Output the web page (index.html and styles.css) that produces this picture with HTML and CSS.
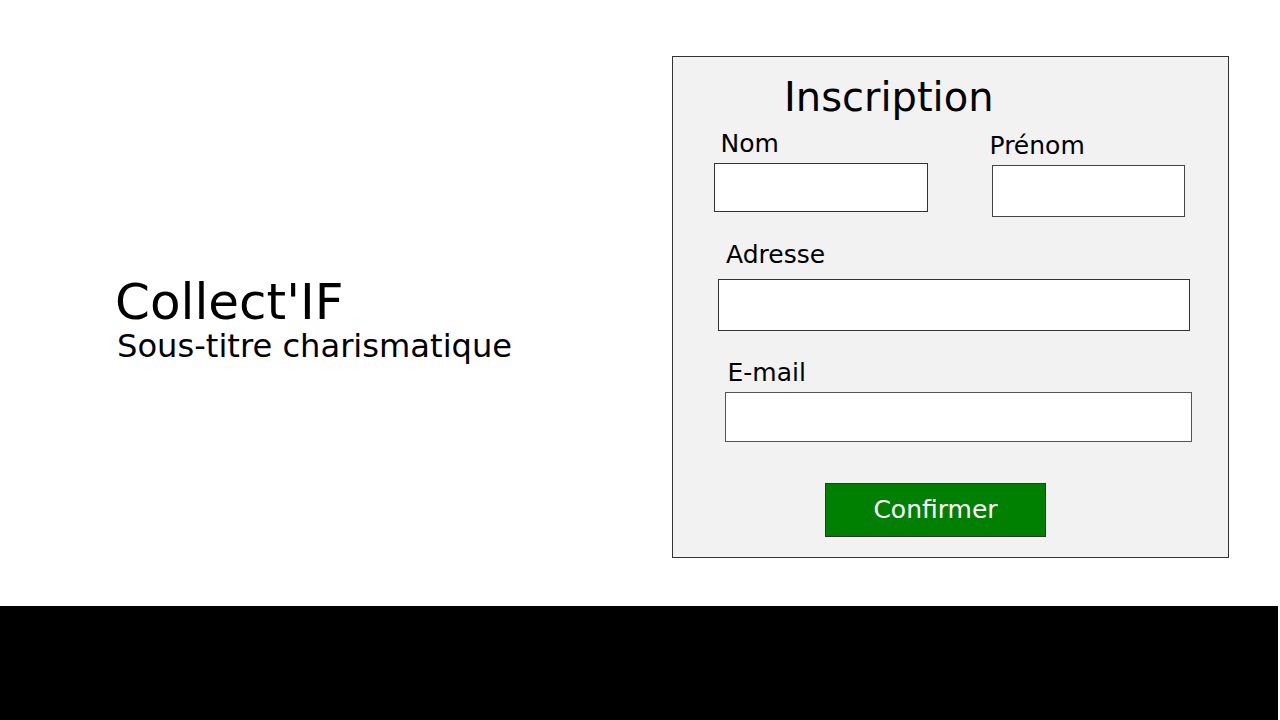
FILE: index.html
```html
<!DOCTYPE html>
<html lang="fr">
<head>
<meta charset="utf-8">
<title>Collect'IF - Inscription</title>
<link rel="stylesheet" href="styles.css">
</head>
<body>
<main class="page">
  <section class="brand">
    <h1 class="brand-title">Collect'IF</h1>
    <p class="brand-subtitle">Sous-titre charismatique</p>
  </section>
  <form class="card">
    <h2 class="card-title">Inscription</h2>
    <div class="names-row">
      <div class="field field-nom">
        <label class="field-label" for="nom">Nom</label>
        <input class="field-input" id="nom" type="text">
      </div>
      <div class="field field-prenom">
        <label class="field-label" for="prenom">Prénom</label>
        <input class="field-input" id="prenom" type="text">
      </div>
    </div>
    <div class="field field-adresse">
      <label class="field-label" for="adresse">Adresse</label>
      <input class="field-input" id="adresse" type="text">
    </div>
    <div class="field field-email">
      <label class="field-label" for="email">E-mail</label>
      <input class="field-input" id="email" type="email">
    </div>
    <button class="confirm" type="button">Confirmer</button>
  </form>
</main>
<footer class="footer"></footer>
</body>
</html>
```
FILE: styles.css
```css
* {
  box-sizing: border-box;
}

html, body {
  margin: 0;
  padding: 0;
  background: #ffffff;
}

body {
  font-family: "DejaVu Sans", "Liberation Sans", sans-serif;
  color: #000000;
  width: 1280px;
  height: 720px;
  overflow: hidden;
}

.page {
  display: flex;
  align-items: flex-start;
  height: 606px;
}

.brand {
  flex: 0 0 672px;
  padding-top: 277px;
  padding-left: 115px;
}

.brand-title {
  margin: 0;
  font-size: 50px;
  line-height: 50px;
  font-weight: normal;
}

.brand-subtitle {
  margin: 3px 0 0 2px;
  font-size: 32.15px;
  line-height: 32px;
}

.card {
  margin-top: 56px;
  width: 557px;
  height: 502px;
  background: #f2f2f2;
  border: 1px solid #333333;
  display: flex;
  flex-direction: column;
  align-items: flex-start;
}

.card-title {
  margin: 19.7px 0 0 111px;
  font-size: 40px;
  line-height: 40px;
  font-weight: normal;
}

.names-row {
  display: flex;
  align-items: flex-start;
  margin-top: 14.8px;
}

.field {
  display: flex;
  flex-direction: column;
  align-items: flex-start;
}

.field-label {
  font-size: 25px;
  line-height: 26px;
}

.field-input {
  display: block;
  margin: 5.5px 0 0 0;
  padding: 0;
  background: #ffffff;
  border: 1px solid #333333;
  border-radius: 0;
  font: inherit;
}

.field-nom {
  margin-left: 41px;
}
.field-nom .field-label {
  padding-left: 6.5px;
}
.field-nom .field-input {
  width: 214px;
  height: 49px;
}

.field-prenom {
  margin-left: 64px;
  margin-top: 2px;
}
.field-prenom .field-label {
  margin-left: -2.5px;
}
.field-prenom .field-input {
  width: 193px;
  height: 52px;
  border-color: #444444;
}

.field-adresse {
  margin: 25.5px 0 0 45px;
}
.field-adresse .field-label {
  padding-left: 8px;
}
.field-adresse .field-input {
  margin-top: 10.5px;
  width: 472px;
  height: 52px;
}

.field-email {
  margin: 29.5px 0 0 52px;
}
.field-email .field-label {
  padding-left: 2.5px;
}
.field-email .field-input {
  width: 467px;
  height: 50px;
  border-color: #555555;
}

.confirm {
  margin: 41px 0 0 152px;
  width: 221px;
  height: 54px;
  padding: 0;
  background: #008000;
  border: 1px solid #333333;
  border-radius: 0;
  color: #ffffff;
  font-family: "DejaVu Sans", "Liberation Sans", sans-serif;
  font-size: 25px;
  line-height: 25px;
}

.footer {
  width: 1278px;
  height: 114px;
  background: #000000;
}
```
